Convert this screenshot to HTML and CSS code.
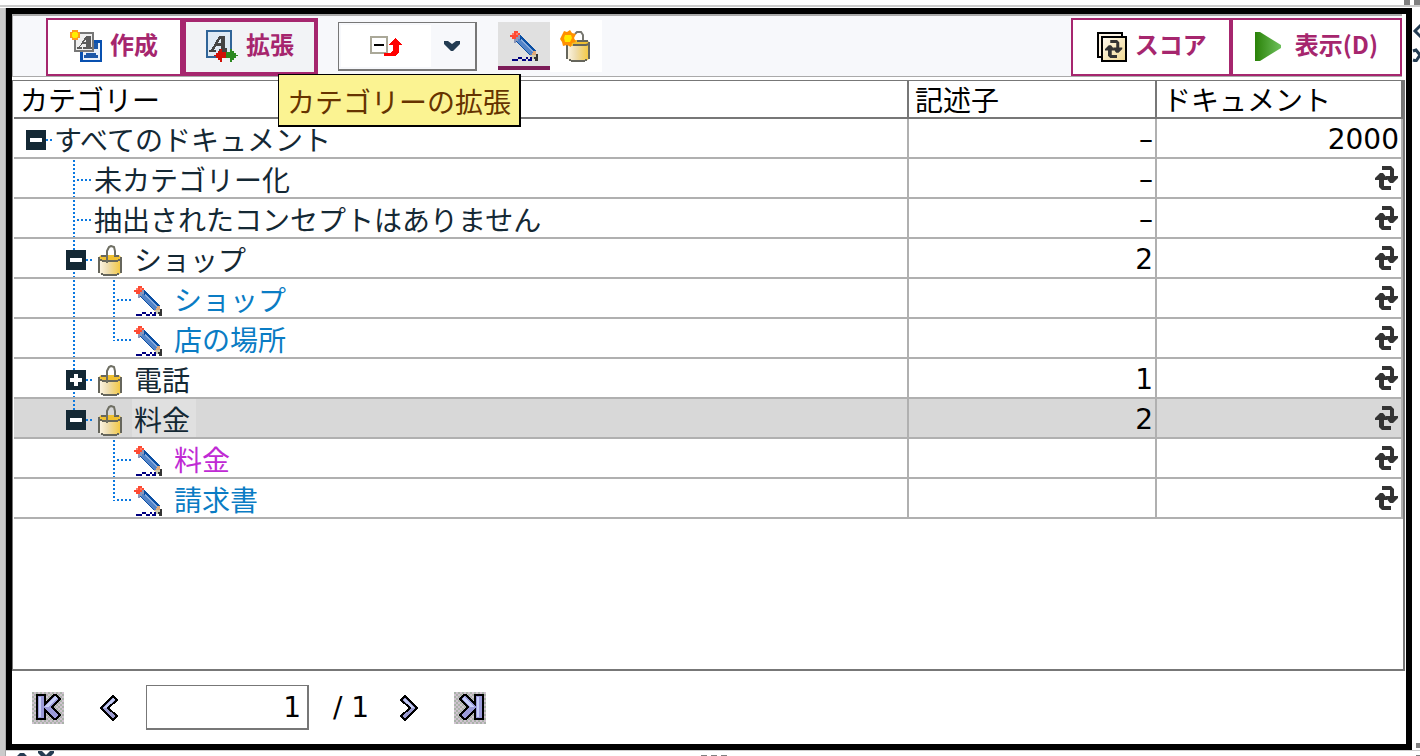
FILE: index.html
```
<!DOCTYPE html>
<html lang="ja">
<head>
  <meta charset="UTF-8" />
  <title>カテゴリー</title>
  <link rel="stylesheet" href="styles.css">
</head>
<body>
  <!-- 共通アイコン -->
  <svg class="defs" width="0" height="0" aria-hidden="true">
    <defs>
      <linearGradient id="gold" x1="0" x2="1" y1="0" y2="0">
        <stop offset="0" stop-color="#fdf6e6" />
        <stop offset="0.4" stop-color="#eeddb0" />
        <stop offset="1" stop-color="#f5c83c" />
      </linearGradient>
      <linearGradient id="leaf" x1="0" x2="1" y1="0" y2="0">
        <stop offset="0" stop-color="#2a8208" />
        <stop offset="1" stop-color="#6ec05c" />
      </linearGradient>
      <linearGradient id="cream" x1="0" x2="1" y1="0" y2="1">
        <stop offset="0" stop-color="#fffaf0" />
        <stop offset="1" stop-color="#f0d890" />
      </linearGradient>
      <pattern id="dither" width="4" height="4" patternUnits="userSpaceOnUse">
        <rect width="4" height="4" fill="#d0c2d0" />
        <rect width="2" height="2" fill="#a9b3a9" />
        <rect x="2" y="2" width="2" height="2" fill="#a9b3a9" />
      </pattern>
    </defs>
    <symbol id="pencil" viewBox="0 0 28 30">
      <path d="M6 8l5-4 15 16-1 4h-5L6 11z" fill="#0a4fa4" />
      <path d="M7 8l2-1 14 15-1 2h-2L7 10z" fill="#5484c8" />
      <path d="M10 9l2-1 11 12-1 1z" fill="#88aadc" />
      <path d="M4 8h2V6h2V4h2v4H8v2H6v2H4z" fill="#8c96b8" />
      <path d="M4 0h4v2h2v2H8v2H6v2H2V6H0V4h2V2h2z" fill="#ff4a32" />
      <path d="M2 2h2v2H2zM6 2h2v2H6z" fill="#ff7a66" />
      <path d="M23 20h3v4h-2v1h-4v-1h2v-2h1z" fill="#e0a878" />
      <path d="M21 24h5v2h-2v2h-2v-2h-1z" fill="#d0ccb0" />
      <path d="M26 23h2v7h-3v-2h-1v-2h2z" fill="#333" />
      <path d="M2 28h6v2H2zM8 26h4v2H8zM12 28h4v2h-4zM16 26h2v2h-2zM18 28h4v2h-4zM20 26h2v2h-2z" fill="#000080" />
    </symbol>
    <symbol id="lock" viewBox="0 0 24 31">
      <path d="M1 12h22v16l-3 2H4l-3-2z" fill="url(#gold)" />
      <path d="M3 10h18l2 2-3 4H4l-3-4z" fill="#f0c030" />
      <path d="M3 11h5M16 11h5M1 12v16M23 12v16M3 29h2M19 29h2M5 30h14M2 15h2M20 15h2M4 16h16" fill="none" stroke="#66665c" stroke-width="2" />
      <path d="M9 18V6l2-4 2-1 3 1 1 4v5" fill="none" stroke="#6e6e62" stroke-width="2" />
    </symbol>
    <symbol id="newlock" viewBox="0 0 32 32">
      <path d="M7 13h22v16l-3 2H10l-3-2z" fill="url(#gold)" />
      <path d="M12 10h15l2 2-3 4H10l-3-3z" fill="#f0c030" />
      <path d="M7 14v15M29 12v17M9 30h2M25 30h2M11 31h14M17 11h11M13 15h13l3-1" fill="none" stroke="#66665c" stroke-width="2" />
      <path d="M15 4l2-2 4 0 2 3v5" fill="none" stroke="#777770" stroke-width="2" />
      <path d="M4 1l3 1 3-2 2 3 4 1-2 4 2 4-4 1-1 4-4-2-4 1-1-4-2-3 2-4z" fill="#ff9000" />
      <path d="M5 5h6l1 3-2 4H5L4 8z" fill="#ffe800" />
    </symbol>
    <symbol id="refresh" viewBox="0 0 24 24">
      <path d="M7 0h9l3 3v7h4v2l-5 5h-3l-4-5v-2h4V4H7z" fill="#333" />
      <path d="M16 24H7l-3-3v-7H0v-2l5-5h3l4 5v2H9v6h7z" fill="#333" />
    </symbol>
  </svg>

  <div class="edge edge-top"><i class="grip"></i><i class="grip"></i></div>
  <div class="edge edge-left"></div>

  <main class="frame">
    <!-- ツールバー -->
    <div class="toolbar">
      <button class="btn" type="button">
        <svg width="32" height="32" viewBox="0 0 32 32" shape-rendering="crispEdges" aria-hidden="true">
          <rect x="11" y="11" width="20" height="20" fill="#eaf2fb" stroke="#0850b0" stroke-width="3" />
          <path d="M16 23h10v2h2v3H14v-3h2zM24 13h4v6h-4z" fill="#1c58a8" />
          <rect x="5" y="3" width="18" height="18" fill="#f0f0f0" stroke="#777" stroke-width="2" />
          <path d="M7 19v-2h2l7-11h5v11h1v2h-9v-2h3v-3h-4l-2 3h2v2zM14 12h2V9z" fill="#5c5c5c" />
          <path d="M2 0h6v2h2v6H8v2H2V8H0V2h2z" fill="#ff9a20" />
          <path d="M3 2h4v1h1v4H7v1H3V7H2V3h1z" fill="#ffee00" />
        </svg>
        <span>作成</span>
      </button>
      <div class="tip-anchor">
        <button class="btn btn-focus" type="button" aria-describedby="tip">
          <svg width="32" height="32" viewBox="0 0 32 32" shape-rendering="crispEdges" aria-hidden="true">
            <rect x="1" y="1" width="24" height="26" fill="#dfeaf5" stroke="#306498" stroke-width="2" />
            <path d="M3 22v-2h2l8-14h6v12h2v4h-8v-3h2v-3h-5l-2 4h2v2zM12 13h3V8z" fill="#444" />
            <path d="M8 25h2v-2h2v-2h2v-2h2v3h4v6h-4v4h-2v-2h-2v-2h-2v-2H8z" fill="#d01008" />
            <path d="M32 25h-2v-2h-2v-2h-2v-2h-2v3h-4v6h4v4h2v-2h2v-2h2v-2h2z" fill="#2c8820" />
          </svg>
          <span>拡張</span>
        </button>
        <div class="tooltip" id="tip" role="tooltip">カテゴリーの拡張</div>
      </div>

      <div class="combo">
        <button class="combo-main" type="button" aria-label="折りたたむ">
          <svg width="32" height="24" viewBox="0 0 32 24" shape-rendering="crispEdges" aria-hidden="true">
            <rect x="1" y="3" width="16" height="16" fill="#fff" stroke="#aaa898" stroke-width="2" />
            <path d="M4 10h10v2H4z" fill="#000" />
            <path d="M25 4l7 7h-3v7l-4 4H14v-3h6l3-3v-5h-5z" fill="#f00" />
          </svg>
        </button>
        <button class="combo-arrow" type="button" aria-label="その他">
          <svg width="16" height="10" viewBox="0 0 16 10" aria-hidden="true"><path d="M0 0h4l4 3 4-3h4v3l-7 7H7L0 3z" fill="#243c52" /></svg>
        </button>
      </div>

      <button class="toggle toggle-on" type="button" aria-label="記述子"><svg width="28" height="30" shape-rendering="crispEdges"><use href="#pencil" /></svg></button>
      <button class="toggle" type="button" aria-label="新規カテゴリー"><svg width="32" height="32"><use href="#newlock" /></svg></button>

      <div class="actions">
        <button class="btn" type="button">
          <svg width="32" height="32" viewBox="0 0 32 32" aria-hidden="true">
            <path d="M3 3h24v24H3z" fill="#fdf4e4" stroke="#000" stroke-width="2" />
            <path d="M7 7h24v24H7z" fill="url(#cream)" stroke="#000" stroke-width="2" />
            <svg x="9" y="10" width="20" height="18"><use href="#refresh" /></svg>
          </svg>
          <span>スコア</span>
        </button>
        <button class="btn" type="button">
          <svg width="32" height="32" viewBox="0 0 32 32" aria-hidden="true"><path d="M0 2h5l21 13v3L5 31H0z" fill="url(#leaf)" /></svg>
          <span>表示(D)</span>
        </button>
      </div>
    </div>

    <!-- カテゴリーツリー -->
    <div class="panel">
      <table class="tree">
        <colgroup><col><col class="col-desc"><col class="col-docs"></colgroup>
        <thead>
          <tr><th>カテゴリー</th><th>記述子</th><th>ドキュメント</th></tr>
        </thead>
        <tbody>
          <tr>
            <td><div class="node"><span class="slot"><button class="knob" type="button" aria-label="折りたたむ"></button></span><span class="label">すべてのドキュメント</span></div></td>
            <td>–</td>
            <td>2000</td>
          </tr>
          <tr>
            <td><div class="node"><span class="indent"></span><span class="slot line branch"></span><span class="label">未カテゴリー化</span></div></td>
            <td>–</td>
            <td><svg class="refresh"><use href="#refresh" /></svg></td>
          </tr>
          <tr>
            <td><div class="node"><span class="indent"></span><span class="slot line branch"></span><span class="label">抽出されたコンセプトはありません</span></div></td>
            <td>–</td>
            <td><svg class="refresh"><use href="#refresh" /></svg></td>
          </tr>
          <tr>
            <td><div class="node"><span class="indent"></span><span class="slot line"><button class="knob" type="button" aria-label="折りたたむ"></button></span><svg class="lock"><use href="#lock" /></svg><span class="label">ショップ</span></div></td>
            <td>2</td>
            <td><svg class="refresh"><use href="#refresh" /></svg></td>
          </tr>
          <tr>
            <td><div class="node"><span class="indent"></span><span class="indent line"></span><span class="slot line branch"></span><svg class="pencil"><use href="#pencil" /></svg><span class="label blue">ショップ</span></div></td>
            <td></td>
            <td><svg class="refresh"><use href="#refresh" /></svg></td>
          </tr>
          <tr>
            <td><div class="node"><span class="indent"></span><span class="indent line"></span><span class="slot line last branch"></span><svg class="pencil"><use href="#pencil" /></svg><span class="label blue">店の場所</span></div></td>
            <td></td>
            <td><svg class="refresh"><use href="#refresh" /></svg></td>
          </tr>
          <tr>
            <td><div class="node"><span class="indent"></span><span class="slot line"><button class="knob knob-plus" type="button" aria-label="展開"></button></span><svg class="lock"><use href="#lock" /></svg><span class="label">電話</span></div></td>
            <td>1</td>
            <td><svg class="refresh"><use href="#refresh" /></svg></td>
          </tr>
          <tr class="selected">
            <td><div class="node"><span class="indent"></span><span class="slot line last"><button class="knob" type="button" aria-label="折りたたむ"></button></span><svg class="lock"><use href="#lock" /></svg><span class="label">料金</span></div></td>
            <td>2</td>
            <td><svg class="refresh"><use href="#refresh" /></svg></td>
          </tr>
          <tr>
            <td><div class="node"><span class="indent"></span><span class="indent"></span><span class="slot line branch"></span><svg class="pencil"><use href="#pencil" /></svg><span class="label purple">料金</span></div></td>
            <td></td>
            <td><svg class="refresh"><use href="#refresh" /></svg></td>
          </tr>
          <tr>
            <td><div class="node"><span class="indent"></span><span class="indent"></span><span class="slot line last branch"></span><svg class="pencil"><use href="#pencil" /></svg><span class="label blue">請求書</span></div></td>
            <td></td>
            <td><svg class="refresh"><use href="#refresh" /></svg></td>
          </tr>
        </tbody>
      </table>
    </div>

    <!-- ページ送り -->
    <div class="pager">
      <button type="button" aria-label="最初のページ">
        <svg width="32" height="32" shape-rendering="crispEdges">
          <path d="M0 0h32v32H0z" fill="url(#dither)" />
          <path d="M5 3h8v9l9-9h2l4 4-8 8 8 8-4 4h-2l-9-9v9H5z" fill="#9a9ad8" stroke="#000" stroke-width="2" />
          <path d="M7 5h2v20H7zM23 4l2 2-9 9h-3z" fill="#c8d0f8" />
        </svg>
      </button>
      <button type="button" aria-label="前のページ">
        <svg width="20" height="28" shape-rendering="crispEdges">
          <path d="M14 2l4 4-9 8 9 8-4 4L2 14z" fill="#9a9ad0" stroke="#000" stroke-width="2" />
          <path d="M14 4l2 2-9 8H5z" fill="#c4ccf4" />
        </svg>
      </button>
      <label class="page"><input type="text" value="1" aria-label="ページ番号"><span>/ 1</span></label>
      <button type="button" aria-label="次のページ">
        <svg width="20" height="28" shape-rendering="crispEdges">
          <path d="M6 2L2 6l9 8-9 8 4 4 12-12z" fill="#9a9ad0" stroke="#000" stroke-width="2" />
          <path d="M6 4L4 6l9 8h2z" fill="#c4ccf4" />
        </svg>
      </button>
      <button type="button" aria-label="最後のページ">
        <svg width="32" height="32" shape-rendering="crispEdges">
          <path d="M0 0h32v32H0z" fill="url(#dither)" />
          <path d="M29 3h-8v9l-9-9h-2L6 7l8 8-8 8 4 4h2l9-9v9h8z" fill="#9a9ad8" stroke="#000" stroke-width="2" />
          <path d="M23 5h2v20h-2zM10 5L8 7l9 8h3z" fill="#c8d0f8" />
        </svg>
      </button>
    </div>
  </main>

  <div class="edge edge-right">
    <svg width="8" height="40" viewBox="0 0 8 40"><path d="M9 3L3 9l6 6M1 29l3-1 4 5-4 6-3-1" fill="none" stroke="#243c52" stroke-width="3" /></svg>
    <i class="grip"></i>
  </div>
  <div class="edge edge-bottom">
    <svg width="40" height="6" viewBox="0 0 40 6"><path d="M0 6l4-4h4l4 4zM22 0h4l4 4 4-4h4v2l-4 4h-8l-4-4z" fill="#243c52" /></svg>
    <span class="grips"><i class="grip"></i><i class="grip"></i><i class="grip"></i></span>
    <i class="grip grip-end"></i>
  </div>
</body>
</html>
```
FILE: styles.css
```
/* ---------- 全体 ---------- */
* {
  box-sizing: border-box;
}

body {
  margin: 0;
  height: 100vh;
  display: grid;
  grid-template-columns: 6px 1fr 8px;
  grid-template-rows: 8px 1fr 6px;
  font-family: "DejaVu Sans", "Noto Sans CJK JP", sans-serif;
  font-size: 28px;
  background: #fff;
  color: #000;
  overflow: hidden;
}

button {
  font-family: inherit;
  border: none;
  padding: 0;
  background: none;
  cursor: pointer;
}

svg {
  display: block;
  flex: none;
}

.defs {
  position: absolute;
}

/* ---------- 外側の縁 ---------- */
.edge {
  display: flex;
  overflow: hidden;
}

.edge-top {
  grid-column: 1 / -1;
  height: 7px;
  border-bottom: 2px solid #ccc;
  justify-content: flex-end;
  gap: 4px;
}

.edge-left {
  grid-row: 2 / 4;
  background: #cbcbcb;
  border-right: 1px solid #aaa;
}

.edge-right {
  flex-direction: column;
  justify-content: space-between;
  align-items: flex-end;
  padding-top: 14px;
}

.edge-bottom {
  grid-column: 2 / -1;
  display: grid;
  grid-template-columns: 1fr auto 1fr;
  align-items: end;
  border-top: 1px solid #ccc;
  padding: 0 8px 0 10px;
}

.grip {
  width: 6px;
  height: 5px;
  flex: none;
  background: #808080;
}

.grip-end {
  justify-self: end;
}

.grips {
  display: flex;
  gap: 4px;
}

.edge-bottom .grip {
  height: 2px;
}

.edge-bottom .grip-end {
  width: 4px;
  margin-right: -8px;
}

.edge-right .grip {
  width: 4px;
  margin-bottom: 2px;
}

.frame {
  display: flex;
  flex-direction: column;
  min-width: 0;
  border: 6px solid #000;
}

/* ---------- ツールバー ---------- */
.toolbar {
  display: flex;
  align-items: flex-start;
  height: 63px;
  margin-right: 4px;
  padding: 2px 0 0 33px;
  border: 1px solid #aaa;
  border-top-width: 2px;
  border-right: none;
  background: #f7f8fb;
}

.btn {
  display: flex;
  align-items: center;
  gap: 8px;
  height: 58px;
  padding: 0 22px 2px;
  border: 2px solid #a6266e;
  background: #fff;
  color: #a6266e;
  font-family: "Noto Sans CJK JP", sans-serif;
  font-size: 24px;
  font-weight: bold;
  line-height: 32px;
}

.btn span {
  padding-bottom: 4px;
}

.btn-focus {
  padding: 0 20px 2px;
  border-width: 4px;
  background: #f2f3f6;
}

.tip-anchor {
  position: relative;
}

.tooltip {
  position: absolute;
  top: 56px;
  left: 96px;
  z-index: 1;
  height: 53px;
  padding: 0 8px;
  border: 1px solid #000;
  border-width: 1px 2px 2px 1px;
  background: #fbf392;
  color: #663300;
  font-family: "Noto Sans CJK JP", sans-serif;
  line-height: 52px;
  white-space: nowrap;
}

.combo {
  display: flex;
  width: 139px;
  height: 49px;
  margin: 4px 21px 0 20px;
  padding: 2px;
  border: 1px solid #777;
  border-width: 1px 2px 2px 1px;
}

.combo-main {
  flex: 1;
  display: grid;
  place-items: center;
  background: #fff;
}

.combo-arrow {
  width: 42px;
  display: grid;
  place-items: center;
}

.toggle {
  display: grid;
  place-items: center;
  width: 52px;
  height: 52px;
  margin-top: 2px;
  background: #fff;
}

.toggle-on {
  height: 48px;
  margin-top: 4px;
  padding-top: 4px;
  border-bottom: 4px solid #7c1c58;
  background: #e0e0e0;
}

.actions {
  display: flex;
  margin-left: auto;
}

/* ---------- ツリー表 ---------- */
.panel {
  flex: 1;
  margin: 3px 1px 0 0;
  padding-left: 1px;
  border: 1px solid #777;
  border-right-width: 2px;
  border-bottom-width: 2px;
}

.tree {
  width: 100%;
  table-layout: fixed;
  border-collapse: separate;
  border-spacing: 0;
}

.col-desc {
  width: 248px;
}

.col-docs {
  width: 246px;
}

th {
  height: 38px;
  padding: 0 6px;
  border: solid #777;
  border-width: 0 2px 2px 0;
  font-family: "Noto Sans CJK JP", sans-serif;
  font-weight: normal;
  line-height: 36px;
  text-align: left;
}

td {
  height: 40px;
  padding: 0 2px 0 0;
  border: solid #b0b0b0;
  border-width: 0 2px 2px 0;
  line-height: 38px;
  text-align: right;
}

td + td {
  padding-top: 4px;
  line-height: 34px;
}

.selected td {
  background: #d8d8d8;
}

.node {
  display: flex;
  align-items: center;
  height: 38px;
  padding-left: 12px;
}

.indent {
  width: 40px;
  height: 38px;
}

.slot {
  position: relative;
  display: flex;
  align-items: center;
  width: 28px;
  height: 38px;
  padding-top: 4px;
}

/* 縦の点線 */
.line {
  background: repeating-linear-gradient(#0a78e0 0 2px, transparent 2px 4px) 7px 1px / 2px 100% no-repeat;
}

.last {
  background-size: 2px 21px;
}

/* 横の点線 */
.slot::after {
  content: '';
  position: absolute;
  top: 20px;
  left: 20px;
  width: 6px;
  height: 2px;
  background: repeating-linear-gradient(to right, #0a78e0 0 2px, transparent 2px 4px);
}

.branch::after {
  left: 11px;
  width: 15px;
}

.knob {
  position: relative;
  width: 20px;
  height: 20px;
  background: linear-gradient(#fff, #fff) center / 12px 4px no-repeat #142834;
}

.knob-plus {
  background: linear-gradient(#fff, #fff) center / 12px 4px no-repeat, linear-gradient(#fff, #fff) center / 4px 12px no-repeat #142834;
}

.lock {
  width: 24px;
  height: 31px;
  margin: 4px 10px 0 4px;
}

.pencil {
  width: 28px;
  height: 30px;
  margin: 6px 10px 0 0;
  shape-rendering: crispEdges;
}

.label {
  height: 38px;
  font-family: "Noto Sans CJK JP", sans-serif;
  line-height: 40px;
  color: #142834;
}

svg + .label {
  padding: 0 6px 0 2px;
}

.selected .label {
  background: #e0e0e0;
}

.label.blue {
  color: #0a7cc4;
}

.label.purple {
  color: #c02ad4;
}

.refresh {
  width: 24px;
  height: 24px;
  margin: -4px 0 0 auto;
}

/* ---------- ページ送り ---------- */
.pager {
  display: flex;
  align-items: center;
  gap: 35px;
  height: 73px;
  padding-left: 20px;
}

.page {
  display: flex;
  align-items: center;
  gap: 24px;
  margin: 0 -5px 0 -8px;
}

.page input {
  width: 163px;
  height: 45px;
  padding: 0 6px;
  border: 1px solid #777;
  border-width: 1px 2px 2px 1px;
  background: #fff;
  font: inherit;
  text-align: right;
}
```
